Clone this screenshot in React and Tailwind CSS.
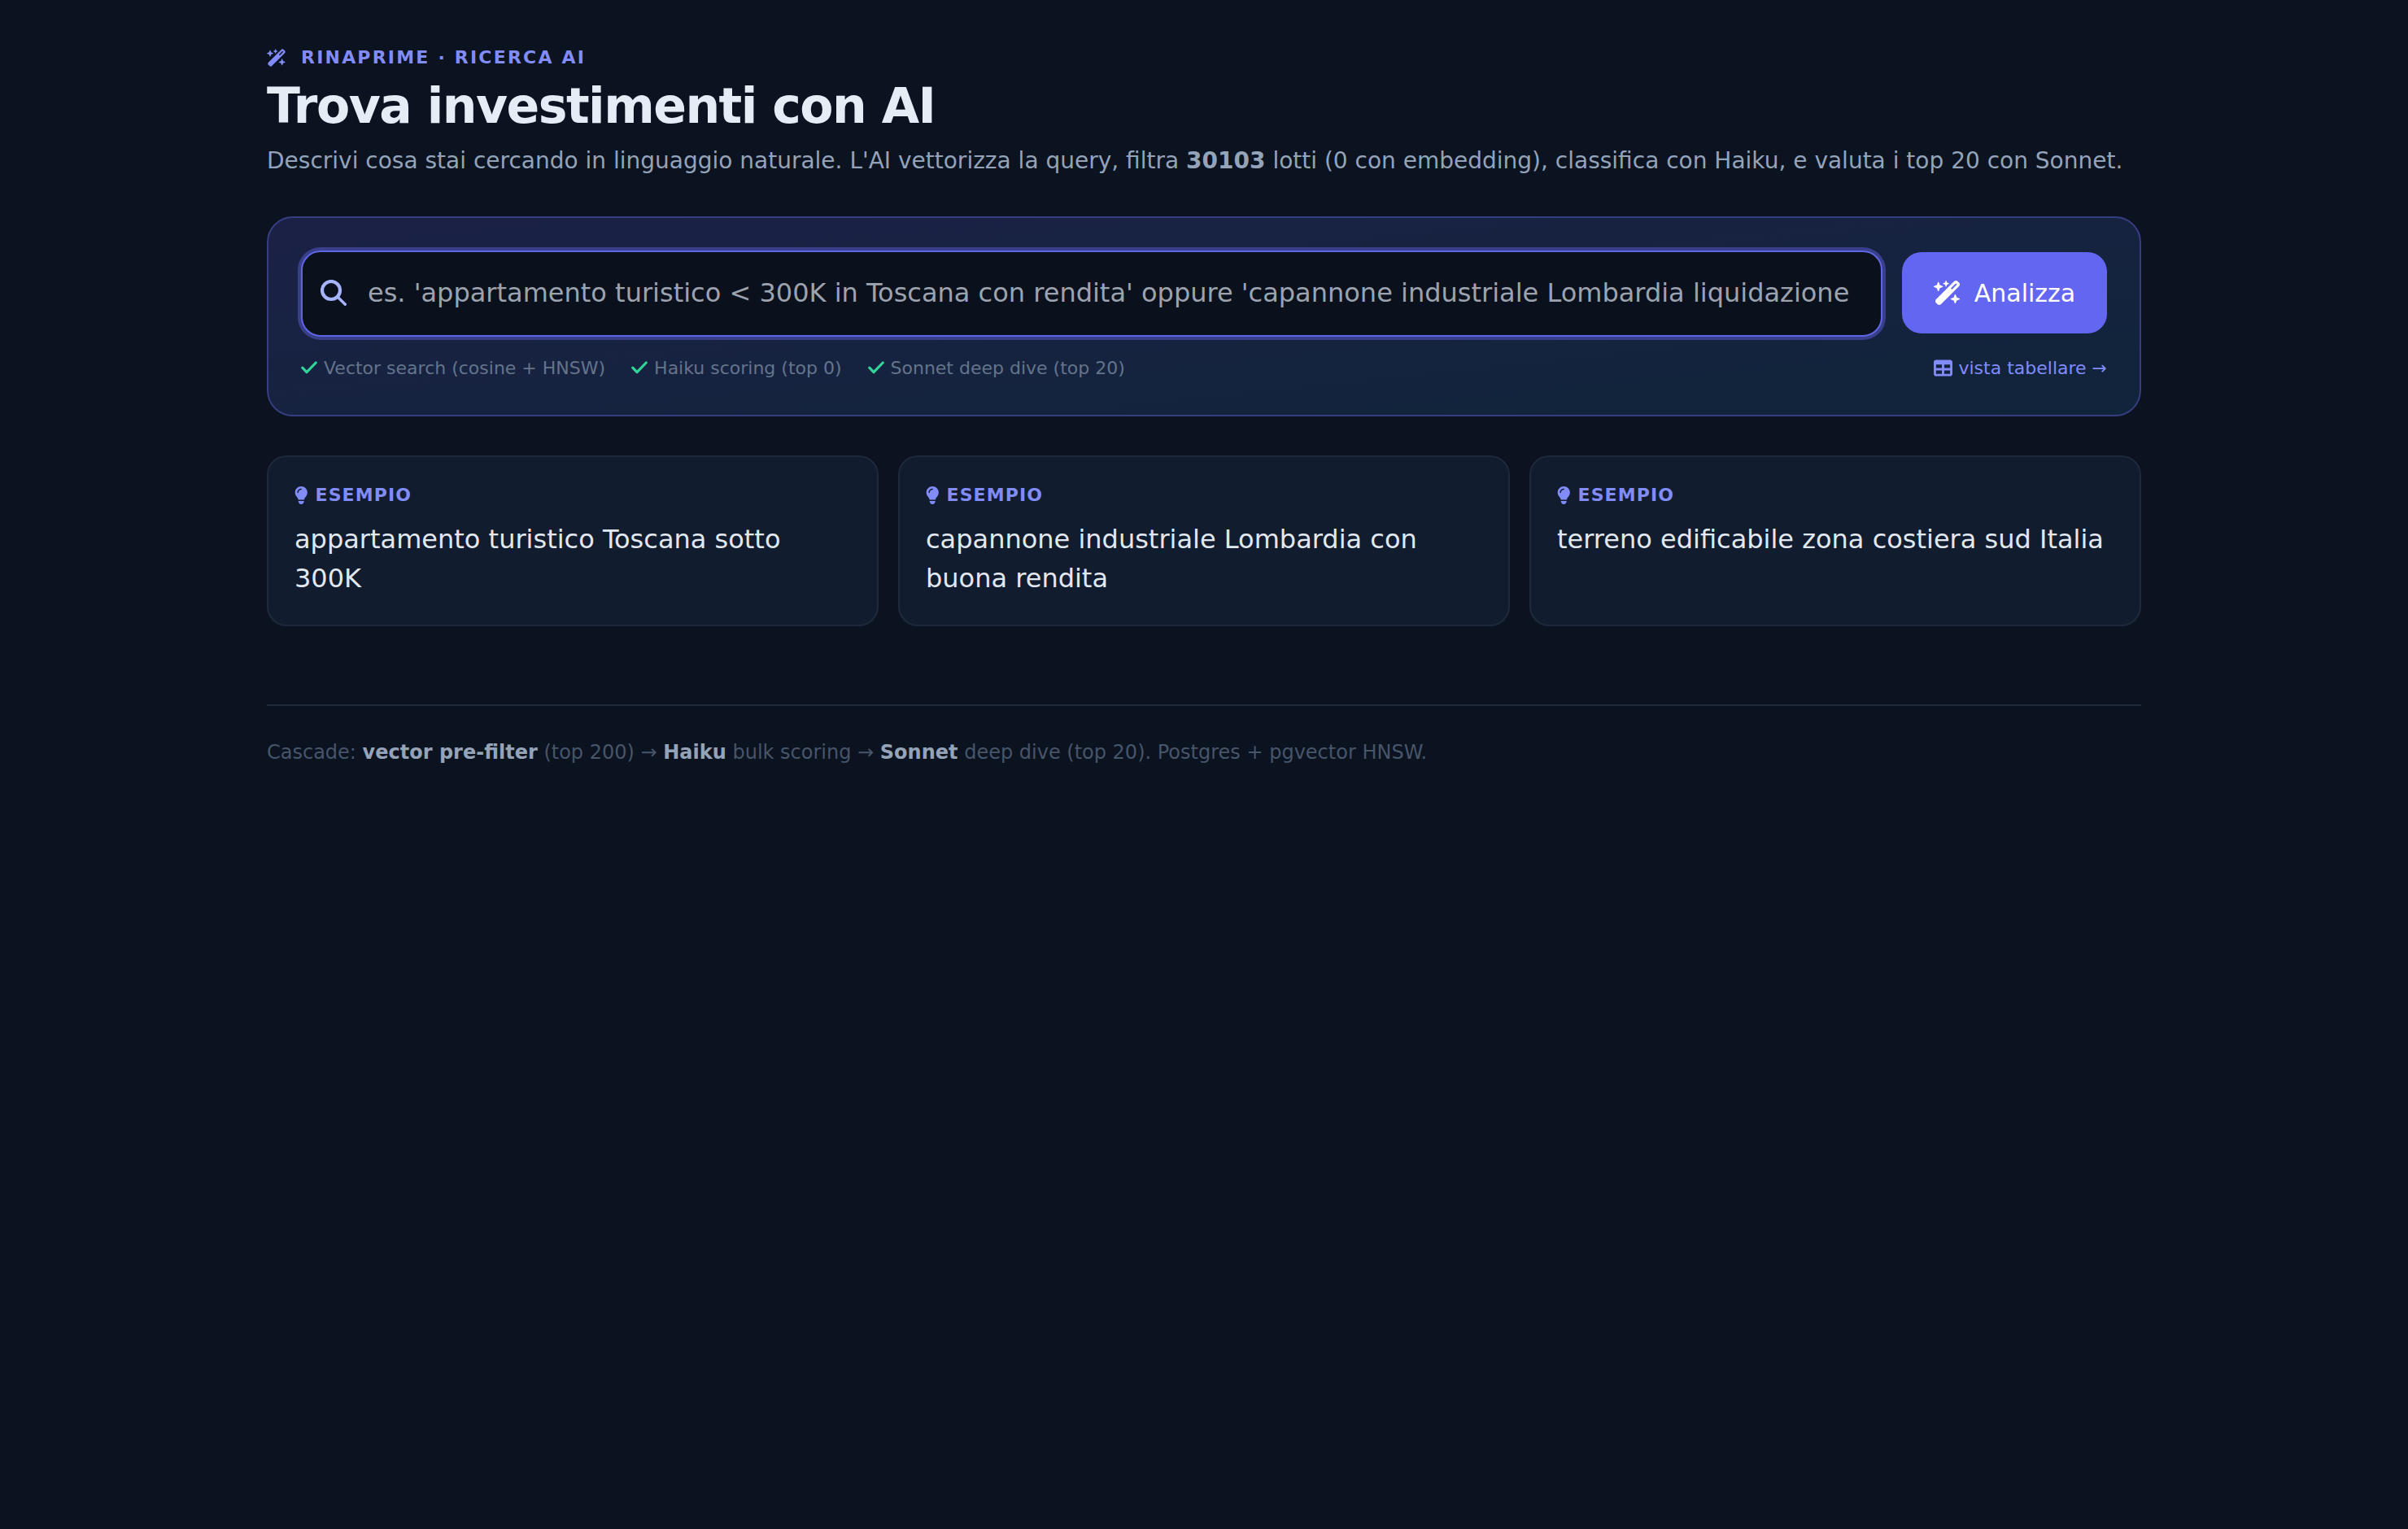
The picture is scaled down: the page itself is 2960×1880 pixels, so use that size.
import React from 'react';
import { FaWandMagicSparkles, FaLightbulb, FaTable } from 'react-icons/fa6';

const checks = ['Vector search (cosine + HNSW)', 'Haiku scoring (top 0)', 'Sonnet deep dive (top 20)'];

const examples = [
  'appartamento turistico Toscana sotto 300K',
  'capannone industriale Lombardia con buona rendita',
  'terreno edificabile zona costiera sud Italia',
];

function SearchIcon() {
  return (
    <svg viewBox="0 0 32 32" fill="none" stroke="currentColor" strokeLinecap="round" className="w-[32px] h-[32px] shrink-0 text-[#a5b4fc]">
      <circle cx="13" cy="13" r="11" strokeWidth="4.2" />
      <path d="M21.2 21.2 L30.3 30.3" strokeWidth="3.4" />
    </svg>
  );
}

function CheckIcon() {
  return (
    <svg viewBox="0 0 20 16" fill="none" stroke="currentColor" strokeWidth="3.2" strokeLinecap="round" strokeLinejoin="round" className="w-[20px] h-[16px] -mt-[2px] text-[#34d399]">
      <path d="M1.8 8.2 L7 13.6 L18.2 2" />
    </svg>
  );
}

export default function App() {
  return (
    <div className="min-h-[1880px] bg-[#0b1220] font-['DejaVu_Sans',sans-serif]">
      <div className="mx-auto w-[2304px] pt-[57px]">
        <div className="flex items-center gap-[18px] text-[#818cf8]">
          <FaWandMagicSparkles className="w-[24px] h-[24px]" />
          <span className="text-[22px] leading-[28px] font-bold tracking-[2.2px]">RINAPRIME · RICERCA AI</span>
        </div>
        <h1 className="mt-[9px] text-[60px] leading-[72px] font-bold tracking-[-1.5px] text-[#e6ecf5]">Trova investimenti con AI</h1>
        <p className="mt-[12px] text-[28px] leading-[40px] text-[#94a3b8]">
          Descrivi cosa stai cercando in linguaggio naturale. L'AI vettorizza la query, filtra <b>30103</b> lotti (0 con embedding), classifica con Haiku, e valuta i top 20 con Sonnet.
        </p>

        <div className="mt-[48px] h-[246px] rounded-[32px] border-2 border-[#363d80] bg-gradient-to-br from-[#1b2146] to-[#10243a] p-[40px]">
          <div className="flex items-start gap-[24px]">
            <div className="flex-1 flex items-center h-[106px] rounded-[24px] border-2 border-[#5f66e3] bg-[#0a101c] shadow-[0_0_0_4px_#3a3f8c] pl-[22px] pr-[22px] gap-[26px] pb-[2px]">
              <SearchIcon />
              <input
                className="flex-1 min-w-0 bg-transparent outline-none text-[32px] text-[#e2e8f0] placeholder:text-[#9ca3af]"
                placeholder="es. 'appartamento turistico < 300K in Toscana con rendita' oppure 'capannone industriale Lombardia liquidazione"
              />
            </div>
            <button className="mt-[2px] w-[252px] h-[100px] rounded-[24px] bg-[#6366f1] flex items-center justify-center gap-[16px] text-white text-[30px]">
              <FaWandMagicSparkles className="w-[34px] h-[34px]" />
              Analizza
            </button>
          </div>
          <div className="mt-[21px] flex items-center justify-between text-[22px] leading-[36px]">
            <div className="flex items-center gap-[32px] text-[#64748b]">
              {checks.map((c) => (
                <span key={c} className="flex items-center gap-[8px]">
                  <CheckIcon />
                  {c}
                </span>
              ))}
            </div>
            <a className="flex items-center gap-[7px] text-[#818cf8]">
              <FaTable className="w-[23px] h-[23px] -mt-[2px]" />
              vista tabellare →
            </a>
          </div>
        </div>

        <div className="mt-[48px] grid grid-cols-3 gap-[24px]">
          {examples.map((text) => (
            <div key={text} className="h-[210px] rounded-[24px] border-2 border-[#1e293b] bg-[#111c2e] px-[32px] pt-[31px]">
              <div className="flex items-center gap-[9px] text-[#818cf8]">
                <FaLightbulb className="w-[16.5px] h-[22px]" />
                <span className="text-[22px] leading-[32px] font-bold tracking-[1.1px]">ESEMPIO</span>
              </div>
              <p className="mt-[14px] text-[32px] leading-[48px] text-[#e2e8f0]">{text}</p>
            </div>
          ))}
        </div>

        <div className="mt-[96px] border-t-2 border-[#1e293b] pt-[39px] text-[24px] leading-[36px] text-[#475569]">
          Cascade: <b className="text-[#94a3b8]">vector pre-filter</b> (top 200) → <b className="text-[#94a3b8]">Haiku</b> bulk scoring → <b className="text-[#94a3b8]">Sonnet</b> deep dive (top 20). Postgres + pgvector HNSW.
        </div>
      </div>
    </div>
  );
}
